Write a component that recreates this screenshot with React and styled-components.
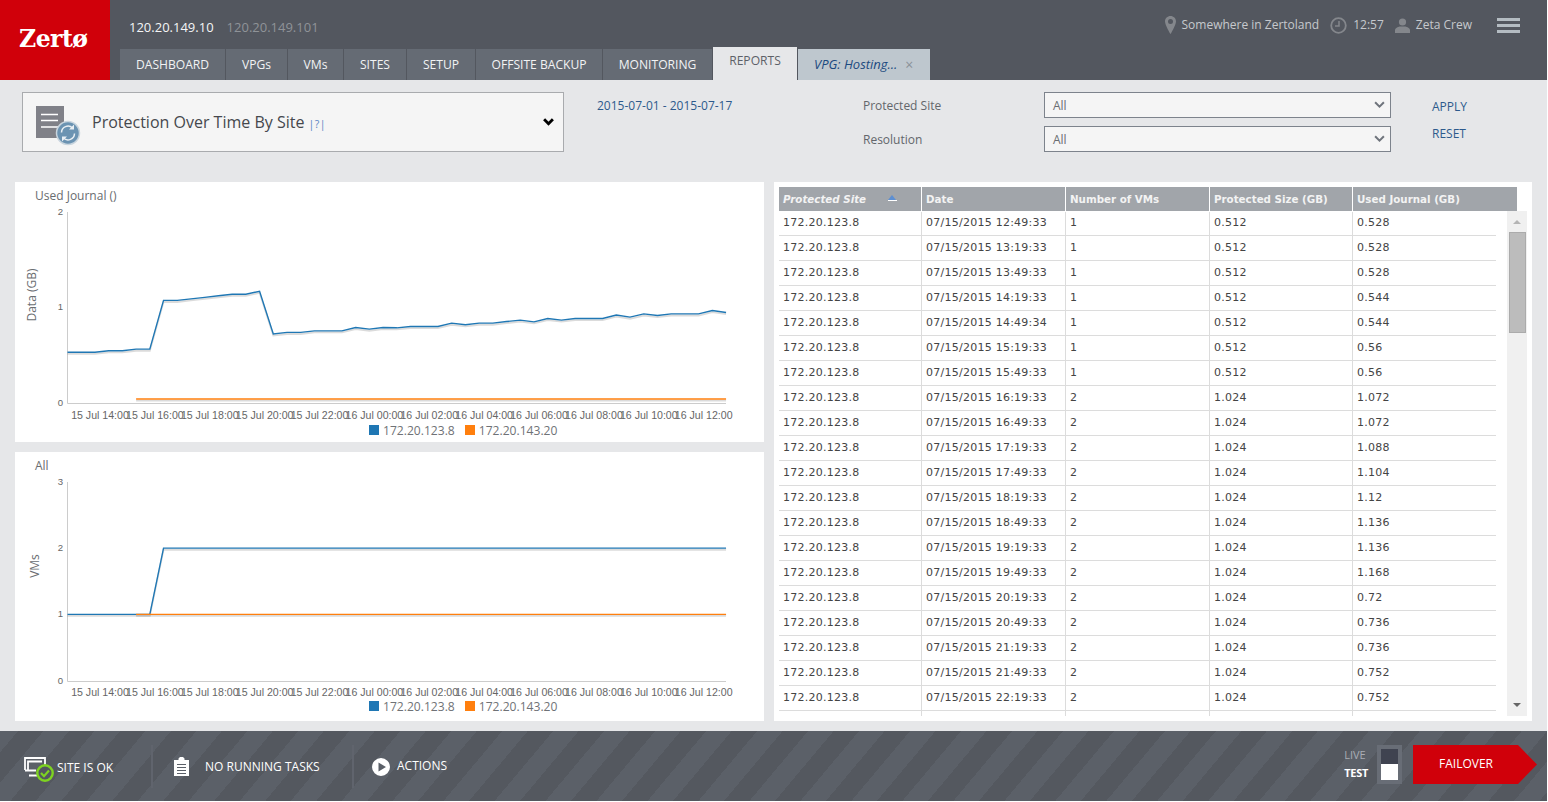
import React from "react";
import styled, { createGlobalStyle } from "styled-components";

const Global = createGlobalStyle`
  html, body { margin: 0; padding: 0; background: #fff; }
  * { box-sizing: border-box; }
  body { font-family: "Open Sans", "Liberation Sans", sans-serif; }
`;

const Page = styled.div`
  width: 1547px;
  height: 801px;
  background: #e6e7e9;
  display: flex;
  flex-direction: column;
  overflow: hidden;
`;

const Icon = styled.svg`
  display: block;
  flex: none;
  margin-left: ${(p) => p.$ml || 0}px;
  margin-right: ${(p) => p.$mr || 0}px;
  margin-top: ${(p) => p.$mt || 0}px;
`;

/* ---------- header ---------- */
const Header = styled.header`
  height: 80px;
  background: #53575f;
  display: flex;
  flex: none;
`;
const Logo = styled.div`
  width: 110px;
  background: #d0000a;
  color: #fff;
  font-family: "DejaVu Serif", serif;
  font-weight: 700;
  font-size: 23.5px;
  letter-spacing: -0.5px;
  padding: 23px 0 0 19px;
  line-height: 32px;
`;
const HeaderMain = styled.div`
  flex: 1;
  display: flex;
  flex-direction: column;
  justify-content: space-between;
`;
const TopRow = styled.div`
  display: flex;
  align-items: center;
  justify-content: space-between;
  padding: 10px 27px 0 19px;
`;
const Hosts = styled.div`
  display: flex;
  gap: 13px;
  padding-top: 4px;
  font-size: 13px;
  line-height: 18px;
`;
const Host = styled.span`
  color: ${(p) => (p.$active ? "#f4f5f6" : "#8f9398")};
  font-weight: ${(p) => (p.$active ? 500 : 400)};
`;
const Status = styled.div`
  display: flex;
  align-items: center;
  font-size: 12px;
  color: #c6c9cd;
  line-height: 30px;
`;
const Burger = styled.div`
  margin-left: 25px;
  width: 23px;
  height: 15px;
  display: flex;
  flex-direction: column;
  justify-content: space-between;
  & > i {
    display: block;
    height: 3px;
    background: #b4bcc2;
  }
`;
const Tabs = styled.nav`
  display: flex;
  align-items: flex-end;
  gap: 1px;
  padding-left: 10px;
`;
const Tab = styled.div`
  height: 31px;
  width: ${(p) => p.$w}px;
  background: #656b74;
  color: #f2f3f4;
  font-size: 12.1px;
  line-height: 31px;
  text-align: center;
`;
const ActiveTab = styled(Tab)`
  height: 33px;
  background: #e6e7e9;
  color: #5d6168;
  line-height: 28px;
`;
const DetailTab = styled(Tab)`
  background: #bec7ce;
  color: #1c4a80;
  font-size: 13px;
  font-style: italic;
  font-weight: 500;
  display: flex;
  align-items: center;
  padding-left: 16px;
  gap: 8px;
  & > span {
    font-style: normal;
    font-weight: 400;
    color: #8a9198;
    font-size: 14px;
  }
`;

/* ---------- filters ---------- */
const Filters = styled.section`
  height: 102px;
  flex: none;
  padding: 12px 0 0 22px;
  display: grid;
  grid-template-columns: 542px 299px 181px 347px auto;
  grid-template-rows: 26px 26px;
  row-gap: 8px;
  font-size: 12px;
  color: #63666b;
  align-items: center;
`;
const ReportSelect = styled.div`
  grid-row: 1 / span 2;
  grid-column: 1;
  height: 60px;
  background: #f5f5f5;
  border: 1px solid #a9abae;
  display: flex;
  align-items: center;
  padding: 0 9px 0 13px;
`;
const ReportTitle = styled.div`
  margin-left: 10px;
  flex: 1;
  font-size: 16px;
  color: #45484d;
  & > sup {
    font-size: 10.5px;
    color: #5b86c4;
    vertical-align: baseline;
    margin-left: 0;
    letter-spacing: 0.5px;
  }
`;
const DateRange = styled.a`
  grid-row: 1;
  grid-column: 2;
  padding-left: 33px;
  color: #2d5a8c;
`;
const FieldLabel = styled.label`
  grid-column: 3;
  grid-row: ${(p) => p.$row};
`;
const Select = styled.div`
  grid-column: 4;
  grid-row: ${(p) => p.$row};
  height: 26px;
  background: #f5f5f5;
  border: 1px solid #7d838c;
  display: flex;
  align-items: center;
  justify-content: space-between;
  padding: 0 5px 0 8px;
  color: #6a6d72;
`;
const ActionLink = styled.a`
  grid-column: 5;
  grid-row: ${(p) => p.$row};
  padding-left: 41px;
  color: #2d5a8c;
  margin-top: ${(p) => p.$mt}px;
`;

/* ---------- content ---------- */
const Content = styled.main`
  height: 539px;
  flex: none;
  display: flex;
  gap: 10px;
  padding: 0 15px;
`;
const ChartColumn = styled.div`
  width: 749px;
  display: flex;
  flex-direction: column;
  gap: 10px;
`;
const ChartPanel = styled.div`
  background: #fff;
  height: ${(p) => p.$h}px;
  display: flex;
  flex-direction: column;
`;
const ChartTitle = styled.div`
  height: 24px;
  flex: none;
  padding: 5px 0 0 20px;
  font-size: 12px;
  line-height: 18px;
  color: #696c70;
`;
const AxisText = styled.text`
  font-family: "Liberation Sans", Arial, sans-serif;
  font-size: ${(p) => p.$size || 10.6}px;
  fill: #666;
`;
const AxisTitle = styled.text`
  font-family: "Open Sans", sans-serif;
  font-size: 12px;
  fill: #6b6e72;
`;
const Legend = styled.div`
  display: flex;
  padding-left: 354px;
  gap: 10px;
  height: 18px;
  align-items: center;
  font-size: 12.1px;
  color: #6f7276;
`;
const LegendItem = styled.div`
  display: flex;
  align-items: center;
  gap: 4px;
  & > i {
    display: block;
    width: 10px;
    height: 10px;
    background: ${(p) => p.$color};
  }
`;

/* ---------- table ---------- */
const TablePanel = styled.div`
  width: 758px;
  background: #fff;
  padding: 5px;
  display: flex;
  flex-direction: column;
  font-family: "DejaVu Sans", Verdana, sans-serif;
  font-size: 11px;
`;
const TableHead = styled.div`
  width: 738px;
  height: 24px;
  flex: none;
  background: #a1a5aa;
  display: grid;
  grid-template-columns: 143px 144px 144px 143px 164px;
  color: #f3f3f3;
  font-size: 10.3px;
  font-weight: 700;
  line-height: 25px;
`;
const HeadCell = styled.div`
  padding-left: 4px;
  border-right: 1px solid #fff;
  position: relative;
  font-style: ${(p) => (p.$sorted ? "italic" : "normal")};
  &:last-child { border-right: 0; }
`;
const SortMark = styled.i`
  position: absolute;
  left: 109px;
  top: 9px;
  width: 9px;
  height: 5px;
  border-bottom: 1px solid #fff;
  &::before {
    content: "";
    position: absolute;
    left: 0;
    top: -1px;
    border-left: 4.5px solid transparent;
    border-right: 4.5px solid transparent;
    border-bottom: 5px solid #5d8fd2;
  }
`;
const TableBody = styled.div`
  flex: 1;
  display: flex;
  min-height: 0;
  height: 505px;
`;
const Rows = styled.div`
  width: 717px;
  overflow: hidden;
  flex: none;
`;
const Row = styled.div`
  display: grid;
  grid-template-columns: 143px 144px 144px 143px 143px;
  height: 25px;
  border-bottom: 1px solid #dcdcdc;
  color: #444;
  letter-spacing: 0.25px;
  line-height: 23px;
`;
const Cell = styled.div`
  padding-left: 4px;
  border-right: 1px solid #dcdcdc;
  &:last-child { border-right: 0; }
`;
const Scrollbar = styled.div`
  margin-left: 11px;
  width: 20px;
  background: #f0f0f0;
  position: relative;
  flex: none;
`;
const ScrollThumb = styled.div`
  position: absolute;
  left: 2px;
  top: 21px;
  width: 17px;
  height: 101px;
  background: #bcbcbc;
  border: 1px solid #ababab;
`;
const ScrollArrow = styled.i`
  position: absolute;
  left: 6px;
  ${(p) => (p.$down ? "bottom: 9px;" : "top: 9px;")}
  border-left: 4px solid transparent;
  border-right: 4px solid transparent;
  ${(p) => (p.$down ? "border-top: 4px solid #666;" : "border-bottom: 4px solid #b4b4b4;")}
`;

/* ---------- footer ---------- */
const Footer = styled.footer`
  margin-top: 10px;
  height: 70px;
  flex: none;
  display: flex;
  align-items: flex-start;
  padding-top: 14px;
  color: #fff;
  font-size: 12px;
  background: repeating-linear-gradient(
    130deg,
    #5b6068 0 13.8px,
    #54585f 13.8px 33.3px,
    #5b6068 33.3px 39.05px
  );
`;
const FooterItem = styled.div`
  display: flex;
  align-items: center;
  height: 43px;
  width: ${(p) => p.$w}px;
  padding-left: ${(p) => p.$pl}px;
  gap: ${(p) => p.$gap}px;
  padding-top: ${(p) => p.$pt || 0}px;
  padding-bottom: ${(p) => p.$pb || 0}px;
  border-right: ${(p) => (p.$line ? "2px solid #60646d" : "0")};
  flex: none;
`;
const FooterRight = styled.div`
  margin-left: auto;
  display: flex;
  align-items: flex-start;
  padding-right: 10px;
`;
const ModeLabels = styled.div`
  display: flex;
  flex-direction: column;
  align-items: flex-start;
  margin: 1px 9px 0 0;
  font-size: 11px;
  line-height: 18px;
`;
const ModeLive = styled.span`
  color: #a9adb5;
`;
const ModeTest = styled.span`
  color: #fff;
  font-weight: 700;
  letter-spacing: -0.3px;
`;
const Toggle = styled.div`
  width: 25px;
  height: 39px;
  border: 4px solid #686d76;
  background: #3f4350;
  display: flex;
  align-items: flex-end;
  justify-content: center;
  & > i {
    display: block;
    width: 17px;
    height: 16px;
    background: #fff;
  }
`;
const Failover = styled.div`
  margin-left: 11px;
  width: 124px;
  height: 39px;
  background: #d0000a;
  clip-path: polygon(0 0, 105px 0, 100% 50%, 105px 100%, 0 100%);
  padding-left: 26px;
  line-height: 37px;
  font-size: 12px;
`;

const cols = [105, 61, 55, 62, 68, 126, 109];
const names = ["DASHBOARD", "VPGs", "VMs", "SITES", "SETUP", "OFFSITE BACKUP", "MONITORING"];

const rows = [
  ["12:49:33", 1, "0.512", "0.528"], ["13:19:33", 1, "0.512", "0.528"], ["13:49:33", 1, "0.512", "0.528"],
  ["14:19:33", 1, "0.512", "0.544"], ["14:49:34", 1, "0.512", "0.544"], ["15:19:33", 1, "0.512", "0.56"],
  ["15:49:33", 1, "0.512", "0.56"], ["16:19:33", 2, "1.024", "1.072"], ["16:49:33", 2, "1.024", "1.072"],
  ["17:19:33", 2, "1.024", "1.088"], ["17:49:33", 2, "1.024", "1.104"], ["18:19:33", 2, "1.024", "1.12"],
  ["18:49:33", 2, "1.024", "1.136"], ["19:19:33", 2, "1.024", "1.136"], ["19:49:33", 2, "1.024", "1.168"],
  ["20:19:33", 2, "1.024", "0.72"], ["20:49:33", 2, "1.024", "0.736"], ["21:19:33", 2, "1.024", "0.736"],
  ["21:49:33", 2, "1.024", "0.752"], ["22:19:33", 2, "1.024", "0.752"],
];

const journal = [
  0.528, 0.528, 0.528, 0.544, 0.544, 0.56, 0.56, 1.072, 1.072, 1.088, 1.104, 1.12, 1.136, 1.136, 1.168,
  0.72, 0.736, 0.736, 0.752, 0.752, 0.752, 0.787, 0.77, 0.787, 0.784, 0.798, 0.798, 0.798, 0.833, 0.816,
  0.833, 0.833, 0.85, 0.865, 0.847, 0.882, 0.865, 0.882, 0.882, 0.882, 0.918, 0.896, 0.93, 0.914, 0.93,
  0.93, 0.93, 0.966, 0.945,
];
const vmsAll = journal.map((_, i) => (i < 7 ? 1 : 2));
const ticks = ["15 Jul 14:00", "15 Jul 16:00", "15 Jul 18:00", "15 Jul 20:00", "15 Jul 22:00", "16 Jul 00:00",
  "16 Jul 02:00", "16 Jul 04:00", "16 Jul 06:00", "16 Jul 08:00", "16 Jul 10:00", "16 Jul 12:00"];

const X0 = 52.5;
const STEP = 13.72;

function Line({ points, color }) {
  const str = points.map((p) => p.join(",")).join(" ");
  const shadow = points.map((p) => `${p[0]},${p[1] + 1.6}`).join(" ");
  return (
    <g>
      <polyline points={shadow} fill="none" stroke="#000" strokeOpacity="0.14" strokeWidth="1.8" />
      <polyline points={str} fill="none" stroke={color} strokeWidth="1.4" />
    </g>
  );
}

function Chart({ w = 749, h, top, bottom, max, yTitle, titleY, titleX, series, labelY }) {
  const yv = (v) => bottom - 0.5 - (v / max) * (bottom - 0.5 - top);
  const levels = Array.from({ length: max + 1 }, (_, i) => i);
  return (
    <Icon width={w} height={h} viewBox={`0 0 ${w} ${h}`}>
      <line x1="52.5" y1={top} x2="52.5" y2={bottom + 0.5} stroke="#ccc" />
      <line x1="52.5" y1={bottom + 0.5} x2="711" y2={bottom + 0.5} stroke="#ccc" />
      {levels.map((l) => (
        <AxisText key={l} x="48" y={yv(l) + 3} textAnchor="end" $size={9.6}>{l}</AxisText>
      ))}
      {ticks.map((t, i) => (
        <AxisText key={t} x={85 + i * 54.88} y={labelY} textAnchor="middle">{t}</AxisText>
      ))}
      <AxisTitle transform={`translate(${titleX} ${titleY}) rotate(-90)`} textAnchor="middle">{yTitle}</AxisTitle>
      {series.map((s) => (
        <Line
          key={s.color}
          color={s.color}
          points={s.values.map((v, i) => [X0 + i * STEP, yv(v)]).slice(s.from || 0)}
        />
      ))}
    </Icon>
  );
}

const LegendRow = () => (
  <Legend>
    <LegendItem $color="#1f77b4"><i />172.20.123.8</LegendItem>
    <LegendItem $color="#ff7f0e"><i />172.20.143.20</LegendItem>
  </Legend>
);

const ChevronDown = ({ color = "#000", w = 10, sw = 2.6 }) => (
  <Icon width={w} height={w * 0.7} viewBox="0 0 10 7">
    <path d="M1 1.2 5 5.2 9 1.2" fill="none" stroke={color} strokeWidth={sw} />
  </Icon>
);

export default function App() {
  return (
    <Page>
      <Global />
      <Header>
        <Logo>Zertø</Logo>
        <HeaderMain>
          <TopRow>
            <Hosts>
              <Host $active>120.20.149.10</Host>
              <Host>120.20.149.101</Host>
            </Hosts>
            <Status>
              <Icon width="11" height="18" viewBox="0 0 11 18" $mr={6}>
                <path fillRule="evenodd" fill="#84878c" d="M5.5 0C2.5 0 0 2.4 0 5.4 0 9 5.5 18 5.5 18S11 9 11 5.4C11 2.4 8.5 0 5.5 0ZM5.5 3a2.5 2.5 0 1 1 0 5 2.5 2.5 0 0 1 0-5Z" />
              </Icon>
              Somewhere in Zertoland
              <Icon width="17" height="17" viewBox="0 0 17 17" $ml={11} $mr={6}>
                <circle cx="8.5" cy="8.5" r="7.3" fill="none" stroke="#84878c" strokeWidth="1.8" />
                <path d="M9 4v5H5" fill="none" stroke="#84878c" strokeWidth="1.5" />
              </Icon>
              12:57
              <Icon width="15" height="15" viewBox="0 0 15 15" $ml={11} $mr={6}>
                <circle cx="7.5" cy="4" r="3.6" fill="#84878c" />
                <path d="M0 15v-3c0-2 3-3.2 4.5-3.6h6C12 8.800 15 10 15 12v3Z" fill="#84878c" />
              </Icon>
              Zeta Crew
              <Burger><i /><i /><i /></Burger>
            </Status>
          </TopRow>
          <Tabs>
            {names.map((n, i) => <Tab key={n} $w={cols[i]}>{n}</Tab>)}
            <ActiveTab $w={84}>REPORTS</ActiveTab>
            <DetailTab $w={132}>VPG: Hosting... <span>×</span></DetailTab>
          </Tabs>
        </HeaderMain>
      </Header>

      <Filters>
        <ReportSelect>
          <Icon width="46" height="40" viewBox="0 0 46 40" $mt={8}>
            <rect x="0" y="0" width="28" height="32" fill="#808188" />
            <path d="M5 8.500h17M5 14.500h17M5 21h17" stroke="#fff" strokeWidth="1.6" />
            <circle cx="32" cy="27" r="11.500" fill="#6b93b2" stroke="#c9d5de" strokeWidth="1.5" />
            <path d="M25.500 26.500a6.500 6.500 0 0 1 11-4.500M38.500 27.500a6.500 6.500 0 0 1-11 4.500" fill="none" stroke="#e8eef3" strokeWidth="1.5" />
            <path d="M38 18.500v5h-5zM26 35.500v-5h5z" fill="#e8eef3" />
          </Icon>
          <ReportTitle>Protection Over Time By Site <sup>|?|</sup></ReportTitle>
          <ChevronDown w={11} />
        </ReportSelect>
        <DateRange>2015-07-01 - 2015-07-17</DateRange>
        <FieldLabel $row={1}>Protected Site</FieldLabel>
        <Select $row={1}>All <ChevronDown color="#6f747c" w={11} sw={1.8} /></Select>
        <FieldLabel $row={2}>Resolution</FieldLabel>
        <Select $row={2}>All <ChevronDown color="#6f747c" w={11} sw={1.8} /></Select>
        <ActionLink $row={1} $mt={2}>APPLY</ActionLink>
        <ActionLink $row={2} $mt={-12}>RESET</ActionLink>
      </Filters>

      <Content>
        <ChartColumn>
          <ChartPanel $h={260}>
            <ChartTitle>Used Journal ()</ChartTitle>
            <Chart h={215} top={6} bottom={197} max={2} yTitle="Data (GB)" titleX={21} titleY={89} labelY={213}
              series={[
                { color: "#1f77b4", values: journal },
                { color: "#ff7f0e", values: journal.map(() => 0.036), from: 5 },
              ]}
            />
            <LegendRow />
          </ChartPanel>
          <ChartPanel $h={269}>
            <ChartTitle>All</ChartTitle>
            <Chart h={221} top={6} bottom={205} max={3} yTitle="VMs" titleX={24} titleY={90} labelY={220}
              series={[
                { color: "#1f77b4", values: vmsAll },
                { color: "#ff7f0e", values: journal.map(() => 1), from: 5 },
              ]}
            />
            <LegendRow />
          </ChartPanel>
        </ChartColumn>

        <TablePanel>
          <TableHead>
            <HeadCell $sorted>Protected Site<SortMark /></HeadCell>
            <HeadCell>Date</HeadCell>
            <HeadCell>Number of VMs</HeadCell>
            <HeadCell>Protected Size (GB)</HeadCell>
            <HeadCell>Used Journal (GB)</HeadCell>
          </TableHead>
          <TableBody>
            <Rows>
              {rows.map((r) => (
                <Row key={r[0]}>
                  <Cell>172.20.123.8</Cell>
                  <Cell>07/15/2015 {r[0]}</Cell>
                  <Cell>{r[1]}</Cell>
                  <Cell>{r[2]}</Cell>
                  <Cell>{r[3]}</Cell>
                </Row>
              ))}
              <Row><Cell /><Cell /><Cell /><Cell /><Cell /></Row>
            </Rows>
            <Scrollbar>
              <ScrollArrow />
              <ScrollThumb />
              <ScrollArrow $down />
            </Scrollbar>
          </TableBody>
        </TablePanel>
      </Content>

      <Footer>
        <FooterItem $w={153} $pl={24} $gap={3} $pt={2} $line>
          <Icon width="30" height="25" viewBox="0 0 30 25" $mt={4}>
            <path d="M1 13V1h20v8M4 13.500V4.500h14M1 13.500h11M5 18.500h8" fill="none" stroke="#fff" strokeWidth="1.8" />
            <circle cx="21" cy="16" r="7.700" fill="#53575f" stroke="#7ed321" strokeWidth="2.400" />
            <path d="M17 16l3 3.200 5-5.700" fill="none" stroke="#7ed321" strokeWidth="2.200" />
          </Icon>
          SITE IS OK
        </FooterItem>
        <FooterItem $w={201} $pl={21} $gap={16} $line>
          <Icon width="15" height="19" viewBox="0 0 15 19">
            <path fillRule="evenodd" fill="#fff" d="M0 3h4.500V1.500L6 0h3l1.500 1.500V3H15v16H0ZM3 7v1h9V7Zm0 3v1h9v-1Zm0 3v1h9v-1Zm0 3v1h9v-1Z" />
          </Icon>
          NO RUNNING TASKS
        </FooterItem>
        <FooterItem $w={120} $pl={18} $gap={7} $pb={2}>
          <Icon width="18" height="18" viewBox="0 0 18 18" $mt={2}>
            <path fillRule="evenodd" fill="#fff" d="M9 0a9 9 0 1 1 0 18A9 9 0 0 1 9 0ZM6.500 4.500v9L14 9Z" />
          </Icon>
          ACTIONS
        </FooterItem>
        <FooterRight>
          <ModeLabels>
            <ModeLive>LIVE</ModeLive>
            <ModeTest>TEST</ModeTest>
          </ModeLabels>
          <Toggle><i /></Toggle>
          <Failover>FAILOVER</Failover>
        </FooterRight>
      </Footer>
    </Page>
  );
}
